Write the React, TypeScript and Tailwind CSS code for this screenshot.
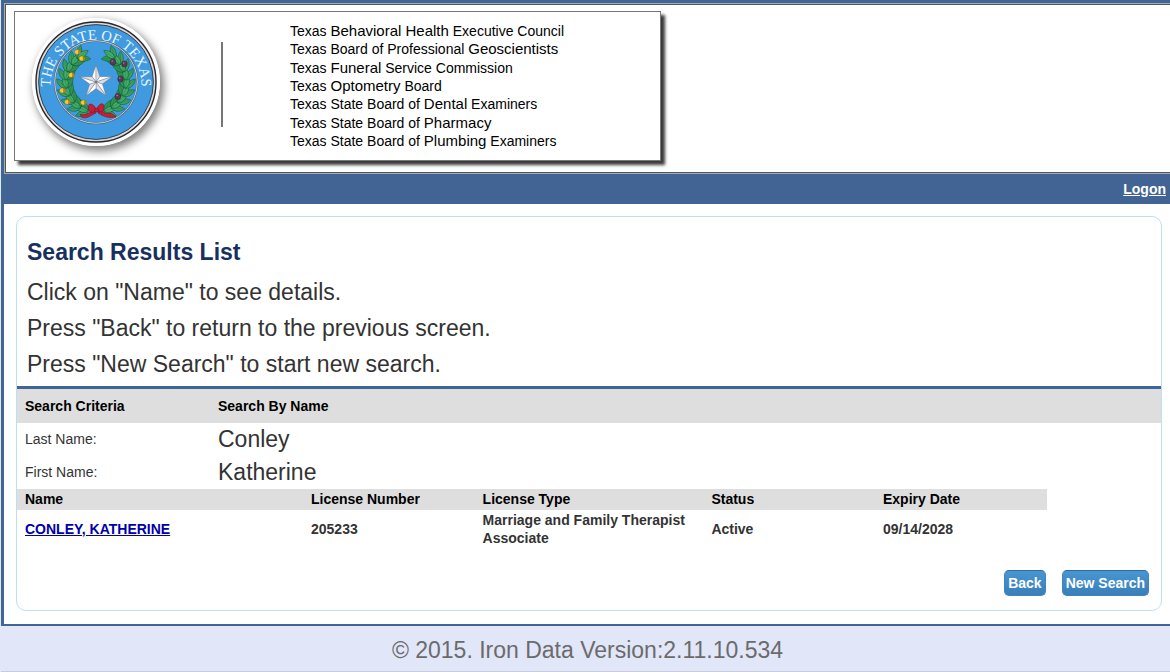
import React from "react";

type Agency = { before: string; strong: string; after?: string };

const agencies: Agency[] = [
  { before: "Texas ", strong: "Behavioral Health", after: " Executive Council" },
  { before: "Texas Board of Professional ", strong: "Geoscientists" },
  { before: "Texas ", strong: "Funeral", after: " Service Commission" },
  { before: "Texas ", strong: "Optometry", after: " Board" },
  { before: "Texas State Board of ", strong: "Dental", after: " Examiners" },
  { before: "Texas State Board of ", strong: "Pharmacy" },
  { before: "Texas State Board of ", strong: "Plumbing", after: " Examiners" },
];

const LEAF = "M0 0C3 -4 8.500 -4 13.500 0C8.500 3.400 3 3.400 0 0Z";

function Branch({ mirrored }: { mirrored?: boolean }) {
  const leaves: React.ReactNode[] = [];
  for (let i = 0; i <= 8; i++) {
    const deg = 105 + i * 15.8;
    const a = (deg * Math.PI) / 180;
    const x = 30 * Math.cos(a);
    const y = 30 * Math.sin(a);
    const dir = deg + 92;
    [-38, 38, 0].forEach((turn) => {
      leaves.push(
        <g key={`${i}:${turn}`} transform={`translate(${x} ${y}) rotate(${dir + turn})`}>
          <path
            d={LEAF}
            fill={turn === 0 ? "#40ad68" : turn > 0 ? "#2f9656" : "#38a260"}
            stroke="#12492b"
            strokeWidth="0.45"
          />
          <path d="M1 0H11" fill="none" stroke="#1c6a41" strokeWidth="0.3" />
        </g>
      );
    });
  }
  return <g transform={mirrored ? "scale(-1 1)" : undefined}>{leaves}</g>;
}

const acorns = [
  [-18.5, -30], [-14, -23.5], [-24.5, -7], [-33.5, 8.5], [-28.5, 20], [-12.5, 20.5],
];
const olives = [
  [17, -20], [28.5, -18], [24.5, -3], [22, 14.5],
];

function Star() {
  const point = (r: number, deg: number) => {
    const a = (deg * Math.PI) / 180;
    return `${r * Math.cos(a)} ${r * Math.sin(a)}`;
  };
  const tips = [0, 1, 2, 3, 4].map((n) => -90 + n * 72);
  return (
    <g stroke="#6a6a70" strokeWidth="0.35" strokeLinejoin="round">
      {tips.map((t) => (
        <g key={t}>
          <path d={`M0 0L${point(17, t)}L${point(6.6, t - 36)}Z`} fill="#ffffff" />
          <path d={`M0 0L${point(17, t)}L${point(6.6, t + 36)}Z`} fill="#dedee2" />
        </g>
      ))}
      <circle r="1.2" fill="#77777c" stroke="none" />
    </g>
  );
}

function Seal() {
  return (
    <svg
      role="img"
      aria-label="The State of Texas seal"
      viewBox="-64 -64 128 128"
      className="size-32 shrink-0 rounded-full shadow-[3px_4px_9px_1px_rgba(0,0,0,0.5)]"
    >
      <defs>
        <path id="seal-arc" d="M-45.5 3A45.5 45.5 0 1 1 45.5 3" />
      </defs>
      <circle r="64" fill="#ffffff" />
      <circle r="60" fill="#d8d8d8" stroke="#2a2629" strokeWidth="1.4" />
      <circle r="57.4" fill="#3f9ae0" stroke="#33363c" strokeWidth="0.9" />
      <circle r="41.3" fill="none" stroke="#4d6271" strokeWidth="1.9" />
      <circle r="41.3" fill="none" stroke="#d2dce4" strokeWidth="0.9" />
      <text fill="#e9f7ff" fontFamily="Liberation Serif, Times New Roman, serif" fontSize="14.5">
        <textPath href="#seal-arc" startOffset="50%" textAnchor="middle">
          THE STATE OF TEXAS
        </textPath>
      </text>
      <Branch />
      <Branch mirrored />
      {acorns.map(([x, y]) => (
        <g key={`${x},${y}`} stroke="#6b4e0c" strokeWidth="0.3">
          <ellipse cx={x} cy={y} rx="3" ry="2.5" fill="#f6c832" />
          <path d={`M${x + 1} ${y - 2.3}a2.6 2.4 0 0 1 0 4.600z`} fill="#c08a1f" />
        </g>
      ))}
      {olives.map(([x, y]) => (
        <g key={`${x},${y}`}>
          <ellipse cx={x} cy={y} rx="2.8" ry="3.1" fill="#5d3759" stroke="#28172b" strokeWidth="0.4" />
          <circle cx={x - 0.8} cy={y - 1} r="0.8" fill="#a384a1" />
        </g>
      ))}
      <Star />
      <g fill="#c81e37" stroke="#6e101f" strokeWidth="0.5" strokeLinejoin="round">
        <path d="M-2 28.500C-6 29 -8 34 -16 32.500L-14 35.500C-8 37 -5 33 0 31Z" />
        <path d="M3 28.500C6 29 10 33 15 31L20 35C14 36 10 36 2 31Z" />
        <path d="M0 27C-2 22 -7 20.500 -7.500 24C-8 30 -5 32 0 29Z" />
        <path d="M1 27C3 21 7.500 20.500 8 24C8.500 30 5 31 1 29Z" />
        <circle cx="0.500" cy="28" r="2" />
      </g>
    </svg>
  );
}

function Banner() {
  return (
    <header className="border border-r-0 border-[#a7adb5]">
      <div className="border border-r-0 border-[#555555] bg-white pt-[6px] pb-[11px] pl-2">
        <div className="flex w-[647px] max-w-full items-start border border-[#777777] bg-white pt-[6px] pb-[10px] pl-[17px] shadow-[4px_4px_3px_0_#3a3a3a]">
          <Seal />
          <div className="mt-6 ml-[61px] h-[85px] w-[2px] shrink-0 bg-[#777777]" />
          <ul className="mt-1 ml-[67px] flex h-32 flex-col justify-between py-px text-[14px] leading-[18px] text-black">
            {agencies.map((a) => (
              <li key={a.strong} className="flex h-4 items-center whitespace-pre">
                <p>
                  {a.before}
                  <span className="text-[15px]">{a.strong}</span>
                  {a.after}
                </p>
              </li>
            ))}
          </ul>
        </div>
      </div>
    </header>
  );
}

const buttonClass =
  "h-[26px] rounded-[5px] border border-[#3f84bb] border-t-[#2f6d9f] bg-linear-to-b from-[#4796d3] to-[#3a7fb8] px-[3px] text-[14px] leading-[18px] font-bold text-white";

const headCell = "bg-[#dedede] text-left font-bold text-black";

export default function App() {
  return (
    <div className="min-h-screen bg-[#e1e6f9] pl-px font-['Liberation_Sans',Arial,sans-serif] text-[14px] leading-[18px] text-[#333333]">
      <div className="border-t-[3px] border-b-2 border-l-[3px] border-[#3f6696] bg-white">
        <Banner />
        <nav className="flex h-[30px] items-center justify-end bg-[#416494] pr-1">
          <a href="#logon" className="font-bold text-white underline">
            Logon
          </a>
        </nav>

        <main className="mt-3 mr-2 mb-[13px] ml-3 rounded-[10px] border border-[#bfdff0] pb-[14px]">
          <div className="px-[10px] pt-[17px] pb-1 text-[23px] leading-9">
            <h1 className="mb-1 font-bold text-[#18305f]">Search Results List</h1>
            <p>Click on "Name" to see details.</p>
            <p>Press "Back" to return to the previous screen.</p>
            <p>Press "New Search" to start new search.</p>
          </div>

          <table className="w-full table-fixed border-collapse border-t-[3px] border-[#3f6696]">
            <colgroup>
              <col className="w-[201px]" />
              <col />
            </colgroup>
            <thead>
              <tr className="h-[35px]">
                <th className={`${headCell} pl-2`}>Search Criteria</th>
                <th className={headCell}>Search By Name</th>
              </tr>
            </thead>
            <tbody>
              <tr className="h-[33px]">
                <th scope="row" className="pl-2 text-left font-normal">Last Name:</th>
                <td className="text-[23px] leading-8">Conley</td>
              </tr>
              <tr className="h-[33px]">
                <th scope="row" className="pl-2 text-left font-normal">First Name:</th>
                <td className="text-[23px] leading-8">Katherine</td>
              </tr>
            </tbody>
          </table>

          <table className="w-[90%] table-fixed border-collapse font-bold">
            <colgroup>
              <col className="w-5/18" />
              <col className="w-1/6" />
              <col className="w-2/9" />
              <col className="w-1/6" />
              <col className="w-1/6" />
            </colgroup>
            <thead>
              <tr className="h-[21px]">
                {["Name", "License Number", "License Type", "Status", "Expiry Date"].map((label) => (
                  <th key={label} className={`${headCell} pl-2`}>{label}</th>
                ))}
              </tr>
            </thead>
            <tbody>
              <tr className="h-[38px]">
                <td className="pl-2">
                  <a href="#conley-katherine" className="text-[#0000a8] underline">
                    CONLEY, KATHERINE
                  </a>
                </td>
                <td className="pl-2">205233</td>
                <td className="pl-2">Marriage and Family Therapist Associate</td>
                <td className="pl-2">Active</td>
                <td className="pl-2">09/14/2028</td>
              </tr>
            </tbody>
          </table>

          <div className="mt-[22px] flex justify-end gap-4 pr-3">
            <button type="button" className={buttonClass}>Back</button>
            <button type="button" className={buttonClass}>New Search</button>
          </div>
        </main>
      </div>

      <footer className="border-b border-[#c9cddb] pt-[6px] pb-[3px] pl-1 text-center text-[23px] leading-9 text-[#6b6b6b]">
        © 2015. Iron Data Version:2.11.10.534
      </footer>
    </div>
  );
}
